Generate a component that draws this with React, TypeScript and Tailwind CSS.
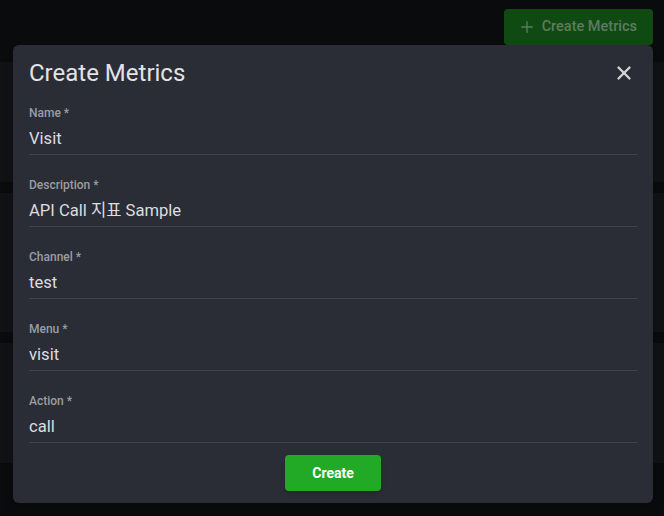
import { X, Plus } from "lucide-react";

const fields = [
  { label: "Name", value: "Visit" },
  { label: "Description", value: "API Call 지표 Sample" },
  { label: "Channel", value: "test" },
  { label: "Menu", value: "visit" },
  { label: "Action", value: "call" },
];

export default function App() {
  return (
    <div
      className="relative h-[516px] w-[664px] overflow-hidden bg-[#0a0b0d]"
      style={{ fontFamily: "Roboto, 'Noto Sans CJK KR', sans-serif" }}
    >
      {/* page behind the dialog */}
      <div className="flex justify-end pt-[9px] pr-[11px]">
        <button className="flex h-[36px] items-center gap-[6px] rounded-[4px] bg-[#0f4a13] pl-[14px] pr-[16px] text-[14.5px] font-medium text-[#5f7a60]">
          <Plus size={18} strokeWidth={1.75} />
          Create Metrics
        </button>
      </div>
      <div className="mt-[17px] flex flex-col gap-[11px]">
        <div className="h-[120px] bg-[#111216]" />
        <div className="h-[139px] bg-[#111216]" />
        <div className="h-[120px] bg-[#111216]" />
      </div>

      {/* dialog */}
      <div className="absolute left-[13px] top-[45px] w-[640px] rounded-[6px] bg-[#2a2d35] px-[16px] pb-[12px] pt-[14px] shadow-lg">
        <div className="flex items-center justify-between">
          <h2 className="text-[24px] leading-[28px] text-[#e2e3e5]">Create Metrics</h2>
          <X size={22} strokeWidth={2.5} className="mr-[2px] text-[#d5d6d8]" />
        </div>
        <div className="mt-[18px] flex flex-col gap-[22px]">
          {fields.map((f) => (
            <div key={f.label} className="border-b border-[#40434b] pb-[3px]">
              <div className="text-[12px] font-medium leading-[16px] text-[#9a9da2]">
                {f.label} *
              </div>
              <div className="mt-[6px] text-[16.6px] leading-[24px] text-[#dcdde0]">{f.value}</div>
            </div>
          ))}
        </div>
        <div className="mt-[12px] flex justify-center">
          <button className="h-[36px] w-[96px] rounded-[4px] bg-[#22aa26] text-[14px] font-bold text-white shadow-md">
            Create
          </button>
        </div>
      </div>
    </div>
  );
}
